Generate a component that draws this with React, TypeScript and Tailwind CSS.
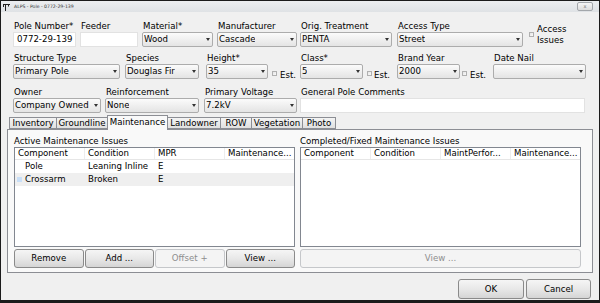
import React from "react"

function Label({ children }: { children: React.ReactNode }) {
    return <div className="h-[11px] whitespace-nowrap pl-[1px] leading-[11px]">{children}</div>
}

function Arrow() {
    return (
        <svg width="4" height="3" viewBox="0 0 4 3" className="shrink-0">
            <path d="M0 0H4L2 3Z" fill="#333" />
        </svg>
    )
}

function Combo({ value }: { value?: string }) {
    return (
        <div className="flex h-[15px] w-full items-center justify-between rounded-[2px] border border-[#acacac] bg-linear-to-b from-[#fbfbfb] to-[#e4e4e4] pl-[1px] pr-[2px]">
            <span className="truncate leading-[11px]">{value}</span>
            <Arrow />
        </div>
    )
}

function TextBox({ value }: { value?: string }) {
    return (
        <div className="h-[15px] w-full border border-[#e2e2e2] bg-white pl-[3px] leading-[13px]">
            {value}
        </div>
    )
}

function Check({ className }: { className: string }) {
    return <div className={`h-[5px] w-[5px] shrink-0 border border-[#b0b0b0] bg-linear-to-br from-[#e4e4e4] to-[#fbfbfb] ${className}`} />
}

function Btn({ children, disabled }: { children: React.ReactNode; disabled?: boolean }) {
    return (
        <div
            className={`flex h-full items-center justify-center rounded-[3px] border ${
                disabled
                    ? "border-[#c5c7ca] bg-[#f4f4f4] text-[#8e8e8e]"
                    : "border-[#8a8a8a] bg-linear-to-b from-[#f5f5f5] via-[#e8e8e8] to-[#d5d5d5] text-black"
            }`}
        >
            {children}
        </div>
    )
}

function PoleIcon() {
    return (
        <svg width="7" height="8" viewBox="0 0 7 8" className="shrink-0">
            <path d="M0 1H7V2H0Z M2 1H3V8H2Z M0 2H1V4H0Z M5 2H6V3.5H5Z" fill="#222" />
        </svg>
    )
}

interface Row {
    cells: string[]
    selected?: boolean
}

function ListView({ cols, rows }: { cols: string[]; rows: Row[] }) {
    return (
        <div className="h-[100px] overflow-hidden border border-[#828790] bg-white">
            <div className="flex h-[12px] border-b border-[#e6e6e6]">
                {cols.map((c) => (
                    <div key={c} className="w-[70px] shrink-0 truncate border-r border-[#ededed] pl-[3px] leading-[11px]">
                        {c}
                    </div>
                ))}
            </div>
            {rows.map((r, i) => (
                <div key={i} className={`flex h-[13px] items-center ${r.selected ? "bg-[#efefef]" : ""}`}>
                    <div className="flex w-[70px] shrink-0 items-center pl-[2px]">
                        <div className={`h-[5px] w-[5px] ${r.selected ? "bg-[#c9dff7]" : ""}`} />
                        <span className="ml-[3px]">{r.cells[0]}</span>
                    </div>
                    {r.cells.slice(1).map((c, j) => (
                        <div key={j} className="w-[70px] shrink-0 pl-[3px]">
                            {c}
                        </div>
                    ))}
                </div>
            ))}
        </div>
    )
}

const tabs = [
    { name: "Inventory", w: "w-[48px]" },
    { name: "Groundline", w: "w-[52px]" },
    { name: "Maintenance", w: "w-[61px]", active: true },
    { name: "Landowner", w: "w-[54px]" },
    { name: "ROW", w: "w-[32px]" },
    { name: "Vegetation", w: "w-[52px]" },
    { name: "Photo", w: "w-[34px]" },
]

export default function App() {
    return (
        <div className="flex h-[303px] w-[600px] flex-col border-x border-t border-b-[3px] border-[#1b1b1b] bg-[#f0f0f0] font-['DejaVu_Sans',sans-serif] text-[8.6px] leading-[11px] text-black">
            {/* title bar */}
            <div className="flex h-[11px] shrink-0 items-center bg-linear-to-b from-[#eceef0] to-[#dfe2e5] pl-[2px] pr-[6px]">
                <PoleIcon />
                <span className="ml-[4px] text-[4.6px] leading-[6px] text-[#333]">ALPS - Pole - 0772-29-139</span>
                <div className="ml-auto flex h-[9px] w-[16px] items-center justify-center rounded-[2px] border border-[#a3a7ab] bg-linear-to-b from-[#f6f6f6] to-[#dcdcdc] text-[5px] leading-[5px] text-[#777]">
                    x
                </div>
            </div>

            <div className="flex flex-1 flex-col px-[6px] pt-[9px]">
                <div className="pl-[6px]">
                    {/* row 1 */}
                    <div className="flex items-start">
                        <div className="w-[63px]">
                            <Label>Pole Number*</Label>
                            <TextBox value="0772-29-139" />
                        </div>
                        <div className="ml-[4px] w-[58px]">
                            <Label>Feeder</Label>
                            <TextBox />
                        </div>
                        <div className="ml-[4px] w-[71px]">
                            <Label>Material*</Label>
                            <Combo value="Wood" />
                        </div>
                        <div className="ml-[4px] w-[80px]">
                            <Label>Manufacturer</Label>
                            <Combo value="Cascade" />
                        </div>
                        <div className="ml-[3px] w-[92px]">
                            <Label>Orig. Treatment</Label>
                            <Combo value="PENTA" />
                        </div>
                        <div className="ml-[5px] w-[126px]">
                            <Label>Access Type</Label>
                            <Combo value="Street" />
                        </div>
                        <Check className="ml-[6px] mt-[11px]" />
                        <div className="ml-[3px] mt-[3px]">
                            <div>Access</div>
                            <div>Issues</div>
                        </div>
                    </div>

                    {/* row 2 */}
                    <div className="mt-[6px] flex items-start">
                        <div className="w-[107px]">
                            <Label>Structure Type</Label>
                            <Combo value="Primary Pole" />
                        </div>
                        <div className="ml-[5px] w-[74px]">
                            <Label>Species</Label>
                            <Combo value="Douglas Fir" />
                        </div>
                        <div className="ml-[7px] w-[62px]">
                            <Label>Height*</Label>
                            <Combo value="35" />
                        </div>
                        <Check className="ml-[4px] mt-[18px]" />
                        <span className="ml-[3px] mt-[17px]">Est.</span>
                        <div className="ml-[4px] w-[63px]">
                            <Label>Class*</Label>
                            <Combo value="5" />
                        </div>
                        <Check className="ml-[4px] mt-[18px]" />
                        <span className="ml-[2px] mt-[17px]">Est.</span>
                        <div className="ml-[7px] w-[63px]">
                            <Label>Brand Year</Label>
                            <Combo value="2000" />
                        </div>
                        <Check className="ml-[2px] mt-[18px]" />
                        <span className="ml-[3px] mt-[17px]">Est.</span>
                        <div className="ml-[7px] w-[93px]">
                            <Label>Date Nail</Label>
                            <Combo />
                        </div>
                    </div>

                    {/* row 3 */}
                    <div className="mt-[6px] flex items-start">
                        <div className="w-[88px]">
                            <Label>Owner</Label>
                            <Combo value="Company Owned" />
                        </div>
                        <div className="ml-[4px] w-[94px]">
                            <Label>Reinforcement</Label>
                            <Combo value="None" />
                        </div>
                        <div className="ml-[5px] w-[93px]">
                            <Label>Primary Voltage</Label>
                            <Combo value="7.2kV" />
                        </div>
                        <div className="ml-[3px] w-[285px]">
                            <Label>General Pole Comments</Label>
                            <TextBox />
                        </div>
                    </div>
                </div>

                {/* tabs */}
                <div className="mt-[2px] flex items-end pl-[2px]">
                    {tabs.map((t, i) =>
                        t.active ? (
                            <div
                                key={t.name}
                                className={`relative z-10 -mb-px -ml-px h-[15px] ${t.w} border border-b-0 border-[#8c8e94] bg-[#f9f9f9] pt-[1px] text-center leading-[11px]`}
                            >
                                {t.name}
                            </div>
                        ) : (
                            <div
                                key={t.name}
                                className={`h-[12px] ${t.w} ${i > 0 ? "-ml-px" : ""} border border-[#8c8e94] bg-linear-to-b from-[#f4f4f4] to-[#e0e0e0] text-center leading-[10px]`}
                            >
                                {t.name}
                            </div>
                        )
                    )}
                </div>

                <div className="flex gap-[5px] border border-[#8c8e94] bg-[#f9f9f9] px-[6px] pb-[4px] pt-[6px]">
                    <div className="w-[281px]">
                        <div className="h-[11px]">Active Maintenance Issues</div>
                        <ListView
                            cols={["Component", "Condition", "MPR", "Maintenance..."]}
                            rows={[
                                { cells: ["Pole", "Leaning Inline", "E"] },
                                { cells: ["Crossarm", "Broken", "E"], selected: true },
                            ]}
                        />
                        <div className="mt-[2px] grid h-[19px] grid-cols-4 gap-[1px]">
                            <Btn>Remove</Btn>
                            <Btn>Add ...</Btn>
                            <Btn disabled>Offset +</Btn>
                            <Btn>View ...</Btn>
                        </div>
                    </div>
                    <div className="w-[281px]">
                        <div className="h-[11px]">Completed/Fixed Maintenance Issues</div>
                        <ListView cols={["Component", "Condition", "MaintPerfor...", "Maintenance..."]} rows={[]} />
                        <div className="mt-[2px] h-[19px]">
                            <Btn disabled>View ...</Btn>
                        </div>
                    </div>
                </div>

                <div className="mt-[6px] flex h-[20px] justify-end gap-[2px] pr-[2px]">
                    <div className="w-[66px]">
                        <Btn>OK</Btn>
                    </div>
                    <div className="w-[65px]">
                        <Btn>Cancel</Btn>
                    </div>
                </div>
            </div>
        </div>
    )
}
